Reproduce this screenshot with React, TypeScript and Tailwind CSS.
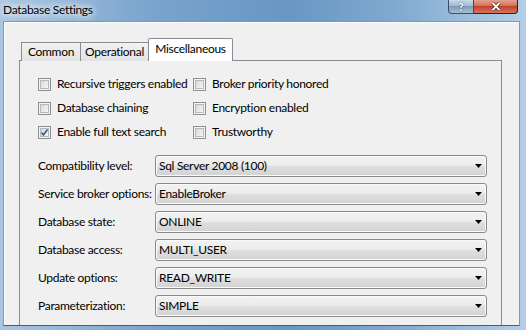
import React from 'react';

const FONT = "[font-family:Lato,'Liberation_Sans',sans-serif]";

function CheckBox({ checked }: { checked?: boolean }) {
  return (
    <span className="flex h-[13px] w-[13px] shrink-0 items-center justify-center border border-[#8e8f8f] bg-[#f4f4f4]">
      <span className="relative flex h-[9px] w-[9px] items-center justify-center border border-[#b5b8bd] bg-[linear-gradient(135deg,#d4d7dc,#f7f7f7)]">
        {checked && (
          <svg width="9" height="9" viewBox="0 0 9 9" className="absolute left-[-1px] top-[-1px]">
            <path d="M1.5 4.5 L3.5 7 L7.5 1.5" fill="none" stroke="#3e5487" strokeWidth="1.6" />
          </svg>
        )}
      </span>
    </span>
  );
}

function Option({ label, checked }: { label: string; checked?: boolean }) {
  return (
    <div className="flex h-[24px] items-center gap-[6px]">
      <CheckBox checked={checked} />
      <span className="whitespace-nowrap">{label}</span>
    </div>
  );
}

function Combo({ label, value }: { label: string; value: string }) {
  return (
    <div className="flex h-[28px] items-center">
      <span className="w-[117px] whitespace-nowrap">{label}</span>
      <div className="flex h-[22px] w-[332px] items-center justify-between rounded-[3px] border border-[#8a8a8a] bg-[linear-gradient(#f3f3f3_0%,#ececec_45%,#dedede_55%,#d2d2d2_100%)] pl-[3px] pr-[4px] shadow-[inset_0_0_0_1px_#fafafa]">
        <span className="whitespace-nowrap">{value}</span>
        <svg width="7" height="4" viewBox="0 0 7 4">
          <path d="M0 0 H7 L3.5 4 Z" fill="#000" />
        </svg>
      </div>
    </div>
  );
}

function Tab({ label, w, active }: { label: string; w: string; active?: boolean }) {
  return active ? (
    <div className={`${w} -ml-px flex h-[23px] items-start justify-center rounded-t-[2px] border border-b-0 border-[#898c95] bg-white pt-[4px]`}>
      {label}
    </div>
  ) : (
    <div className={`${w} -ml-px flex h-[19px] items-center justify-center border border-b-0 border-[#898c95] bg-[linear-gradient(#f2f2f2,#e3e3e3)] first:ml-0`}>
      {label}
    </div>
  );
}

export default function App() {
  return (
    <div className={`${FONT} flex h-[330px] w-[526px] flex-col overflow-hidden bg-[linear-gradient(90deg,#a9c5e0_0%,#78a3cc_30%,#6897c4_55%,#80a9cf_75%,#b3cfe7_100%)] text-[12px] leading-none tracking-[-0.3px] text-black`}>
      {/* title bar */}
      <div className="flex h-[21px] shrink-0 items-start justify-between">
        <span className="pl-[3px] pt-[4px] text-[12px] [text-shadow:0_0_6px_#fff,0_0_10px_#fff,0_0_14px_#fff]">Database Settings</span>
        <div className="mr-[8px] flex">
          <div className="flex h-[14px] w-[26px] items-center justify-center rounded-bl-[4px] border border-t-0 border-[#3a4d63] bg-[linear-gradient(#c9d9e9,#9db6cf_50%,#7f9cba_50%,#a7bfd6)] text-[11px] font-bold text-white [text-shadow:0_0_2px_#23374f]">
            ?
          </div>
          <div className="flex h-[14px] w-[44px] items-center justify-center rounded-br-[4px] border border-l-0 border-t-0 border-[#3d1a18] bg-[linear-gradient(#e4a08f,#d16b56_50%,#c3412e_50%,#d5765c)]">
            <svg width="10" height="9" viewBox="0 0 10 9">
              <path d="M1.5 1 L8.5 8 M8.5 1 L1.5 8" stroke="#4a1d19" strokeWidth="3.2" />
              <path d="M1.5 1 L8.5 8 M8.5 1 L1.5 8" stroke="#fff" strokeWidth="1.8" />
            </svg>
          </div>
        </div>
      </div>

      {/* dialog body */}
      <div className="ml-[3px] mr-[6px] h-[305px] shrink-0 overflow-hidden border border-[#8696a7] border-b-[#4f5d6b] bg-[#f0f0f0] pl-[15px] pt-[16px] shadow-[inset_1px_1px_0_#fdfdfd]">
        <div className="relative z-10 flex h-[23px] items-end pl-[2px]">
          <Tab label="Common" w="w-[60px]" />
          <Tab label="Operational" w="w-[69px]" />
          <Tab label="Miscellaneous" w="w-[85px]" active />
        </div>
        <div className="-mt-px h-[300px] w-[483px] border border-[#898c95] bg-[#f0f0f0] pl-[18px] pt-[11px]">
          <div className="flex">
            <div className="w-[155px]">
              <Option label="Recursive triggers enabled" />
              <Option label="Database chaining" />
              <Option label="Enable full text search" checked />
            </div>
            <div>
              <Option label="Broker priority honored" />
              <Option label="Encryption enabled" />
              <Option label="Trustworthy" />
            </div>
          </div>
          <div className="mt-[8px]">
            <Combo label="Compatibility level:" value="Sql Server 2008 (100)" />
            <Combo label="Service broker options:" value="EnableBroker" />
            <Combo label="Database state:" value="ONLINE" />
            <Combo label="Database access:" value="MULTI_USER" />
            <Combo label="Update options:" value="READ_WRITE" />
            <Combo label="Parameterization:" value="SIMPLE" />
          </div>
        </div>
      </div>
    </div>
  );
}
